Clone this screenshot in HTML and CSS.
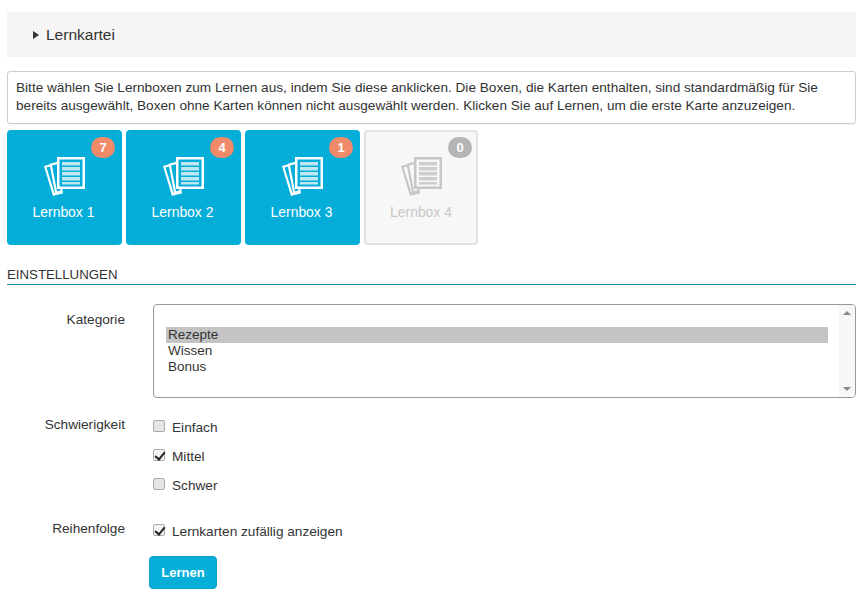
FILE: index.html
```html
<!DOCTYPE html>
<html lang="de">
<head>
<meta charset="utf-8">
<title>Lernkartei</title>
<link rel="stylesheet" href="styles.css">
</head>
<body>
<svg class="defs" width="0" height="0" aria-hidden="true">
  <symbol id="cards" viewBox="0 0 42 40">
    <path class="pg" d="M0 9 9 6.500l8 30-8 2.500z"/>
    <path class="pn" d="M2.500 10.500 7.500 9.200l6.500 25.300-3.500 1.300z"/>
    <path class="pg" d="M5.500 7 14 4.500l5 32-7.500 1.500z"/>
    <path class="pn" d="M8 8.500 13 7.200l3.500 26.300-3.500.8z"/>
    <path class="pg" d="M13 0h28v32H13z"/>
    <path class="pn" d="M15.500 2.500h23v27h-23z"/>
    <path class="ps" d="M18 5h18v3.500H18zM18 10h18v3.500H18zM18 15h18v3.500H18zM18 20h18v3.500H18zM18 25h18v2.500H18z"/>
  </symbol>
</svg>
<main class="page">
  <div class="accordion"><span class="arrow"></span><span>Lernkartei</span></div>
  <p class="intro">Bitte wählen Sie Lernboxen zum Lernen aus, indem Sie diese anklicken. Die Boxen, die Karten enthalten, sind standardmäßig für Sie bereits ausgewählt, Boxen ohne Karten können nicht ausgewählt werden. Klicken Sie auf Lernen, um die erste Karte anzuzeigen.</p>
  <div class="boxes">
    <div class="box"><span class="badge">7</span><svg class="icon"><use href="#cards"/></svg><span class="name">Lernbox 1</span></div>
    <div class="box"><span class="badge">4</span><svg class="icon"><use href="#cards"/></svg><span class="name">Lernbox 2</span></div>
    <div class="box"><span class="badge">1</span><svg class="icon"><use href="#cards"/></svg><span class="name">Lernbox 3</span></div>
    <div class="box off"><span class="badge">0</span><svg class="icon"><use href="#cards"/></svg><span class="name">Lernbox 4</span></div>
  </div>
  <h2 class="section">EINSTELLUNGEN</h2>
  <div class="form">
    <div class="row row-cat">
      <span class="label">Kategorie</span>
      <div class="list">
        <div class="items">
          <div class="item selected">Rezepte</div>
          <div class="item">Wissen</div>
          <div class="item">Bonus</div>
        </div>
        <div class="scroll"><span class="up"></span><span class="down"></span></div>
      </div>
    </div>
    <div class="row row-diff">
      <span class="label">Schwierigkeit</span>
      <div class="checks">
        <label class="check"><input type="checkbox"><span>Einfach</span></label>
        <label class="check"><input type="checkbox" checked><span>Mittel</span></label>
        <label class="check"><input type="checkbox"><span>Schwer</span></label>
      </div>
    </div>
    <div class="row row-order">
      <span class="label">Reihenfolge</span>
      <label class="check"><input type="checkbox" checked><span>Lernkarten zufällig anzeigen</span></label>
    </div>
    <div class="row-btn"><button class="btn" type="button">Lernen</button></div>
  </div>
</main>
</body>
</html>
```
FILE: styles.css
```css
* { box-sizing: border-box; }
html, body { margin: 0; padding: 0; background: #fff; }
body { font: 13.65px/16px "Liberation Sans", Arial, sans-serif; color: #333; }
.defs { position: absolute; }
.page { width: 865px; height: 600px; padding: 12px 9px 0 7px; overflow: hidden; }
.accordion { height: 45px; background: #f5f5f5; display: flex; align-items: center; gap: 7px; padding-left: 26px; font-size: 15.5px; }
.arrow { width: 0; height: 0; border-left: 6px solid #333; border-top: 4px solid transparent; border-bottom: 4px solid transparent; }
.intro { margin: 14px 0 0; height: 53px; padding: 7px 8px; border: 1px solid #ccc; border-radius: 3px; line-height: 18px; font-size: 13.62px; box-shadow: 0 1px 1px rgba(0,0,0,.05); }
.boxes { display: flex; gap: 4px; margin-top: 6px; }
.box { --a: #fff; --b: #05add9; --c: #bde7f3; position: relative; width: 115px; height: 115px; background: #05add9; border-radius: 4px; color: #fff; display: flex; flex-direction: column; align-items: center; padding-top: 27px; }
.name { margin-top: 7px; font-size: 13.9px; margin-left: -2px; }
.icon { width: 42px; height: 40px; margin-left: 1px; }
.pg { fill: var(--a); }
.pn { fill: var(--b); }
.ps { fill: var(--c); }
.badge { position: absolute; top: 7px; right: 7px; width: 24px; height: 21px; border-radius: 11px; background: #f08a68; color: #fff; font-weight: 700; font-size: 13px; line-height: 21px; text-align: center; }
.off { --a: #c6c6c6; --b: #f7f7f7; --c: #cecece; width: 114px; background: #f7f7f7; border: 2px solid #e2e2e2; color: #c8c8c8; padding-top: 25px; }
.off .name { margin-left: 0; }
.off .badge { top: 5px; right: 4px; background: #b5b5b5; }
.section { margin: 22px 0 0; height: 18px; font-size: 13.25px; font-weight: 400; line-height: 16px; border-bottom: 1px solid #1f8ba8; }
.form { margin-top: 19px; }
.row { display: flex; }
.label { width: 118px; text-align: right; flex: none; }
.row-cat { height: 94px; }
.row-cat .label { padding-top: 8px; }
.row-diff .label { padding-top: 5px; }
.row-order .label { padding-top: 5px; }
.list { flex: 1; margin-left: 28px; height: 94px; border: 1px solid #999; border-radius: 4px; display: flex; overflow: hidden; }
.items { flex: 1; padding: 22px 11px 0 12px; }
.item { height: 16px; line-height: 16px; padding-left: 2px; font-size: 13.5px; }
.selected { background: #c4c4c4; }
.scroll { width: 16px; background: #f7f7f7; position: relative; }
.up, .down { position: absolute; left: 4px; width: 0; height: 0; border-left: 4px solid transparent; border-right: 4px solid transparent; }
.up { top: 6px; border-bottom: 4px solid #888; }
.down { bottom: 6px; border-top: 4px solid #888; }
.row-diff { margin-top: 14px; height: 86px; }
.checks { display: flex; flex-direction: column; gap: 13px; margin-left: 28px; padding-top: 8px; }
.check { display: flex; align-items: center; height: 16px; }
.row-order .check { margin-left: 28px; margin-top: 8px; }
.check input { appearance: none; margin: 0 7px 0 0; width: 12px; height: 12px; flex: none; position: relative; top: -2px; border: 1px solid #aaa; border-radius: 2px; background: #e6e6e6; }
.check input:checked { background: #f4f4f4; }
.check input:checked::after { content: ""; position: absolute; left: 3px; top: 0; width: 4px; height: 8px; border: solid #222; border-width: 0 2px 2px 0; transform: rotate(40deg); }
.row-order { margin-top: 18px; height: 31px; }
.row-btn { margin-left: 142px; margin-top: 9px; }
.btn { width: 68px; height: 33px; border: 1px solid #0a9cc4; border-radius: 4px; background: #05add9; color: #fff; font: 700 13px/16px "Liberation Sans", Arial, sans-serif; padding: 0; }
```
